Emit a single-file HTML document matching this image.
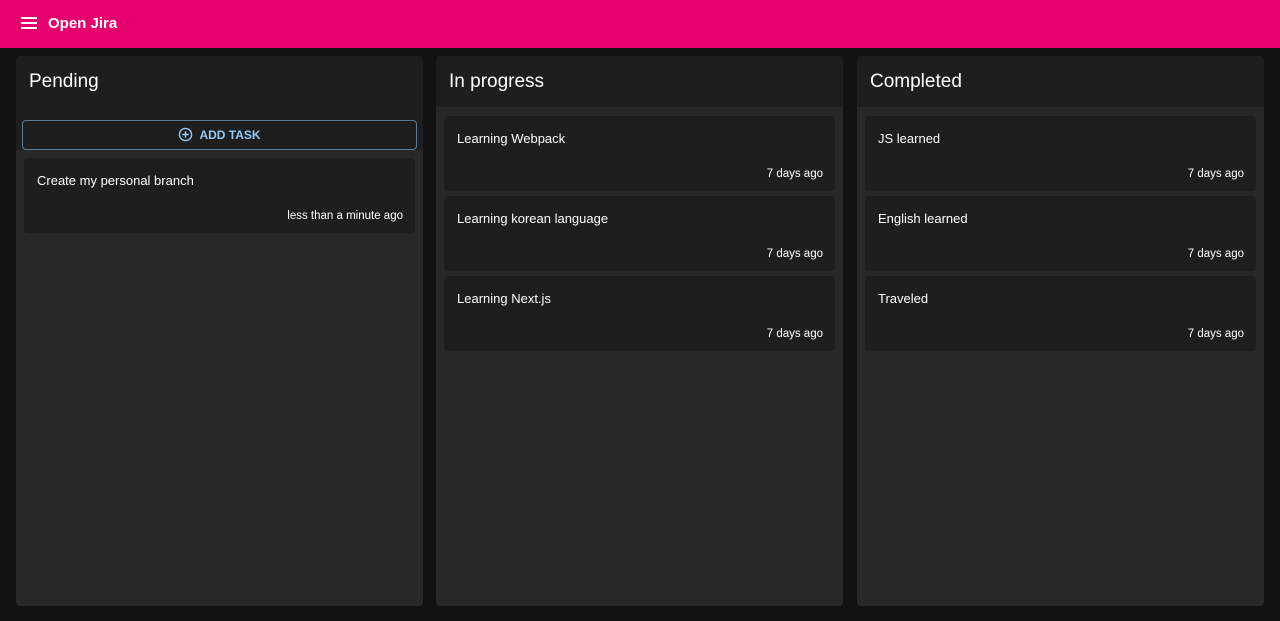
<!DOCTYPE html><html><head><style>
*{margin:0;padding:0;box-sizing:border-box}
body{width:1280px;height:621px;background:#121212;font-family:"Liberation Sans",sans-serif;color:#fff;position:relative;overflow:hidden}
.bar{position:absolute;left:0;top:0;width:1280px;height:48px;background:#e6006e}
.bar .t{position:absolute;left:48px;top:15px;font-size:15px;font-weight:bold}
.col{position:absolute;top:56px;width:407px;height:550px;background:#282828;border-radius:4px;overflow:hidden}
.hd{background:#1e1e1e;height:51px;padding:15px 13px;font-size:19px}
.card{position:absolute;left:8px;width:391px;height:75px;background:#1e1e1e;border-radius:4px}
.card .a{position:absolute;left:13px;top:15px;font-size:13px}
.card .b{position:absolute;right:12px;top:52px;font-size:11.5px}
</style></head><body>
<div class="bar"><svg style="position:absolute;left:21px;top:16px" width="16" height="14" viewBox="0 0 16 14"><rect y="1" width="16" height="2" fill="#fff"/><rect y="6" width="16" height="2" fill="#fff"/><rect y="11" width="16" height="2" fill="#fff"/></svg><div class="t">Open Jira</div></div>
<div class="col" style="left:16px"><div class="hd" style="height:94px">Pending</div>
<div style="position:absolute;left:6px;top:64px;width:395px;height:30px;border:1px solid #5c7a95;border-radius:4px;text-align:center;font-size:12px;font-weight:bold;color:#90caf9;line-height:28px"><svg width="15" height="15" viewBox="0 0 16 16" style="vertical-align:-3px;margin-right:6px"><circle cx="8" cy="8" r="6.5" stroke="#90caf9" stroke-width="1.5" fill="none"/><path d="M8 4.5v7M4.5 8h7" stroke="#90caf9" stroke-width="1.5"/></svg>ADD TASK</div>
<div class="card" style="top:102px"><div class="a">Create my personal branch</div><div class="b">less than a minute ago</div></div></div>
<div class="col" style="left:436px"><div class="hd">In progress</div>
<div class="card" style="top:60px"><div class="a">Learning Webpack</div><div class="b">7 days ago</div></div>
<div class="card" style="top:140px"><div class="a">Learning korean language</div><div class="b">7 days ago</div></div>
<div class="card" style="top:220px"><div class="a">Learning Next.js</div><div class="b">7 days ago</div></div></div>
<div class="col" style="left:857px"><div class="hd">Completed</div>
<div class="card" style="top:60px"><div class="a">JS learned</div><div class="b">7 days ago</div></div>
<div class="card" style="top:140px"><div class="a">English learned</div><div class="b">7 days ago</div></div>
<div class="card" style="top:220px"><div class="a">Traveled</div><div class="b">7 days ago</div></div></div>
</body></html>
